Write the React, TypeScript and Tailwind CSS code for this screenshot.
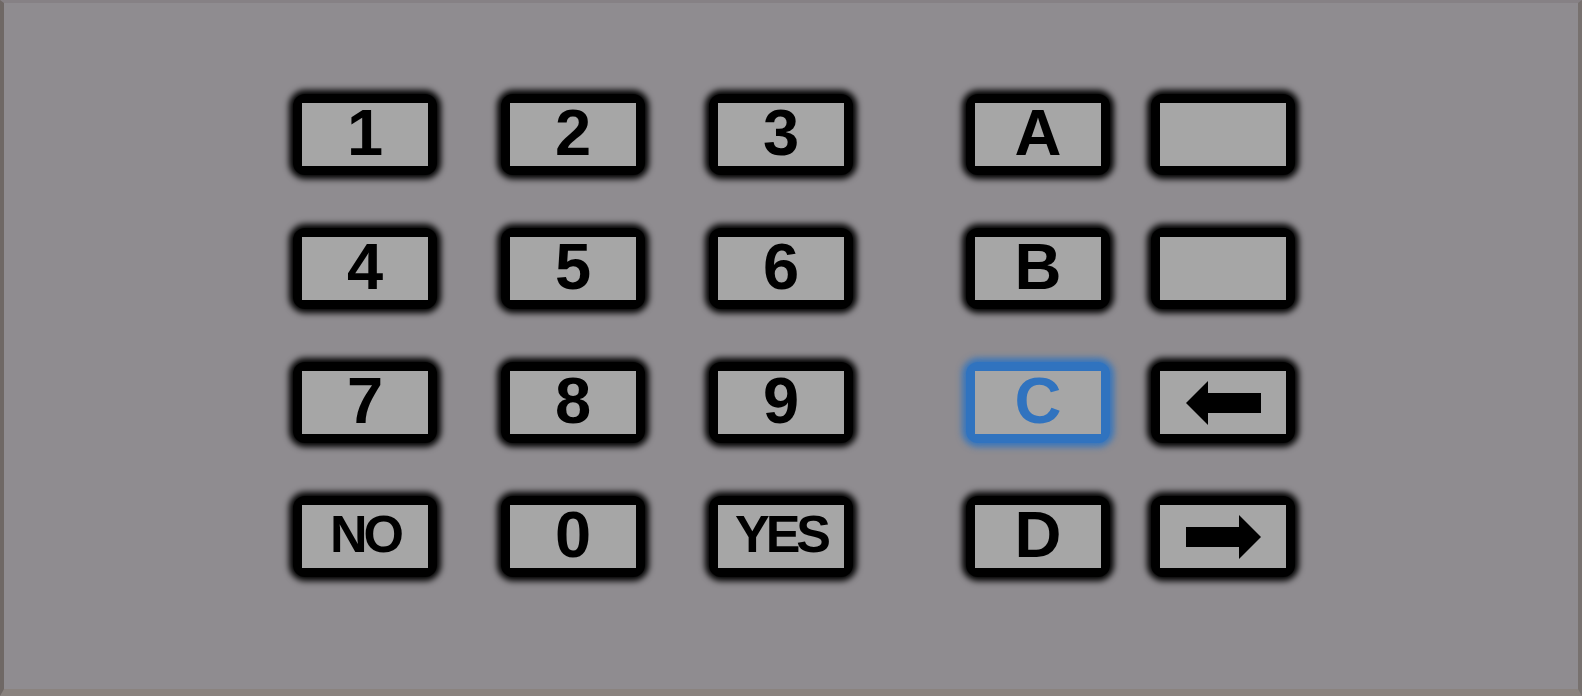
import { ReactNode } from "react"

type Key = {
  label?: ReactNode
  small?: boolean
  active?: boolean
}

const LeftArrow = () => (
  <svg width="75" height="44" viewBox="0 0 75 44">
    <polygon points="75,12 22,12 22,0 0,22 22,44 22,32 75,32" fill="#000" />
  </svg>
)

const RightArrow = () => (
  <svg width="75" height="44" viewBox="0 0 75 44">
    <polygon points="0,12 53,12 53,0 75,22 53,44 53,32 0,32" fill="#000" />
  </svg>
)

const numberKeys: Key[] = [
  { label: "1" }, { label: "2" }, { label: "3" },
  { label: "4" }, { label: "5" }, { label: "6" },
  { label: "7" }, { label: "8" }, { label: "9" },
  { label: "NO", small: true }, { label: "0" }, { label: "YES", small: true },
]

const sideKeys: Key[] = [
  { label: "A" }, {},
  { label: "B" }, {},
  { label: "C", active: true }, { label: <LeftArrow /> },
  { label: "D" }, { label: <RightArrow /> },
]

const KeyButton = ({ label, small, active }: Key) => (
  <div
    className={
      active
        ? "rounded-[12px] bg-[#3073bf] p-[9px] shadow-[0_0_6px_4px_rgba(48,115,191,0.9)]"
        : "rounded-[12px] bg-black p-[9px] shadow-[0_0_6px_4px_#000]"
    }
  >
    <div
      className={
        "flex h-[63px] w-[126px] items-center justify-center bg-[#a6a6a6] pb-[5px] font-bold leading-none " +
        (active ? "text-[#3073bf] " : "text-black ") +
        (small ? "text-[52px] tracking-[-4px]" : "text-[65px]")
      }
    >
      {typeof label === "string" ? label : <span className="pt-[5px]">{label}</span>}
    </div>
  </div>
)

export default function App() {
  return (
    <div
      className="h-[696px] w-full border-t-[3px] border-r-[4px] border-b-[7px] border-l-[4px] border-t-[#868185] border-r-[#77716f] border-b-[#8a837f] border-l-[#6f6865] bg-[#8f8c90] pt-[91px] pl-[289px]"
      style={{ fontFamily: '"Liberation Sans", Arial, sans-serif' }}
    >
      <div className="flex">
        <div className="grid grid-cols-3 gap-x-[64px] gap-y-[53px]">
          {numberKeys.map((k, i) => (
            <KeyButton key={i} {...k} />
          ))}
        </div>
        <div className="ml-[113px] grid grid-cols-2 gap-x-[41px] gap-y-[53px]">
          {sideKeys.map((k, i) => (
            <KeyButton key={i} {...k} />
          ))}
        </div>
      </div>
    </div>
  )
}
